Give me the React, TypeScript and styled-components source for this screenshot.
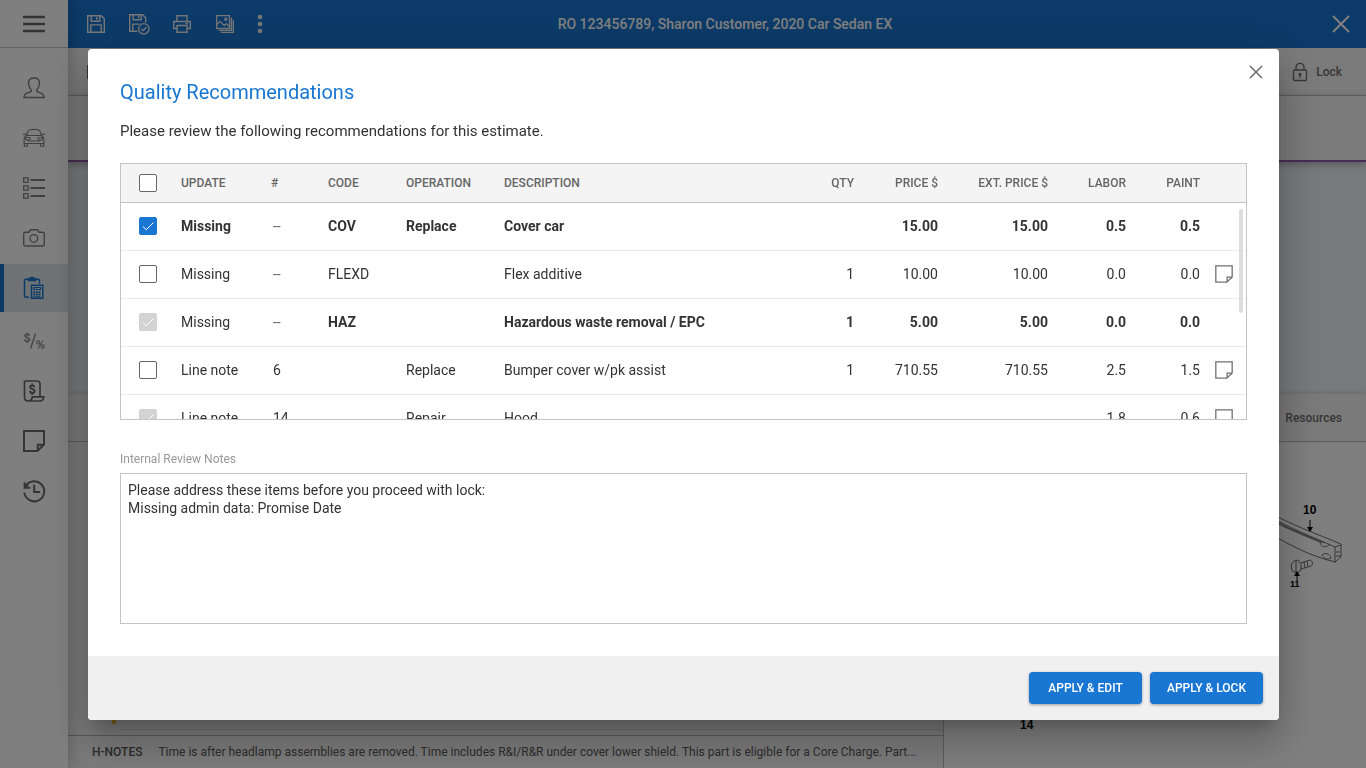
import React, { useState } from "react";
import styled, { createGlobalStyle, css } from "styled-components";

const Global = createGlobalStyle`
  *, *::before, *::after { box-sizing: border-box; }
  body { margin: 0; font-family: Roboto, "Liberation Sans", sans-serif; font-size: 14px; color: #333; }
  button, textarea { font-family: inherit; }
`;

/* ---------- page behind the dialog ---------- */

const Shell = styled.div`
  display: flex;
  min-height: 100vh;
  background: #fff;
`;

const Sidebar = styled.nav`
  width: 68px;
  flex: none;
  background: #fff;
  box-shadow: 0 0 16px rgba(0, 0, 0, 0.3);
  z-index: 1;
`;

const iconButton = css`
  display: flex;
  align-items: center;
  justify-content: center;
  padding: 0;
  border: 0;
  background: none;
  cursor: pointer;
`;

const MenuButton = styled.button`
  ${iconButton}
  width: 100%;
  height: 48px;
  color: #666;
  border-bottom: 1px solid #c8c8c8;
`;

const NavList = styled.div<{ $first?: boolean }>`
  display: flex;
  flex-direction: column;
  gap: 2px;
  padding-top: ${(p) => (p.$first ? "16px" : "5px")};
`;

const tones = { light: "#999", normal: "#808080", dark: "#6a6a6a", active: "#1976d2" };
type Tone = keyof typeof tones;

const NavButton = styled.button<{ $tone: Tone }>`
  ${iconButton}
  height: 48px;
  color: ${(p) => tones[p.$tone]};
  background: ${(p) => (p.$tone === "active" ? "#dfe6ec" : "transparent")};
  border-left: 4px solid ${(p) => (p.$tone === "active" ? "#1976d2" : "transparent")};
  padding-right: 4px;
`;

const Main = styled.main`
  flex: 1;
  min-width: 0;
  display: flex;
  flex-direction: column;
`;

const TopBar = styled.header`
  display: grid;
  grid-template-columns: 1fr auto 1fr;
  align-items: center;
  height: 48px;
  padding-left: 16px;
  background: #1976d2;
  color: #fff;
`;

const TopActions = styled.div`
  display: flex;
  gap: 19px;
`;

const TopButton = styled.button<{ $slim?: boolean }>`
  ${iconButton}
  width: ${(p) => (p.$slim ? "8px" : "24px")};
  height: 24px;
  color: #eee;
`;

const TopTitle = styled.div`
  font-weight: 500;
  line-height: 20px;
`;

const TopClose = styled.button`
  ${iconButton}
  width: 50px;
  height: 48px;
  justify-self: end;
  color: #fff;
`;

const Toolbar = styled.div`
  display: flex;
  justify-content: space-between;
  align-items: center;
  height: 48px;
  padding: 0 24px 0 19px;
  background: #f6f6f6;
  border-bottom: 1px solid #c8c8c8;
`;

const ToolbarButton = styled.button`
  ${iconButton}
  gap: 8px;
  height: 24px;
  font-size: 12px;
  font-weight: 500;
  color: #6f6f6f;
`;

const SummaryBand = styled.div`
  height: 66px;
  background: #f6f6f6;
  border-bottom: 2px solid #8e5aa8;
  box-shadow: 0 2px 8px rgba(0, 0, 0, 0.3);
  z-index: 0;
`;

const Canvas = styled.div`
  height: 232px;
  background: #eff3f7;
`;

const TabBar = styled.div`
  display: flex;
  justify-content: flex-end;
  align-items: center;
  height: 48px;
  padding-right: 24px;
  background: #f4f4f4;
  border-bottom: 1px solid #bbb;
  box-shadow: 0 -1px 4px rgba(0, 0, 0, 0.15);
`;

const TabButton = styled.button`
  ${iconButton}
  font-size: 12px;
  font-weight: 500;
  color: #6f6f6f;
`;

const Panels = styled.div`
  flex: 1;
  display: grid;
  grid-template-columns: minmax(0, 876fr) minmax(0, 422fr);
`;

const LinesPanel = styled.section`
  display: flex;
  flex-direction: column;
  justify-content: flex-end;
  background: #f6f6f6;
  border-right: 1px solid #bbb;
`;

const LineRow = styled.div`
  display: flex;
  height: 16px;
  padding-left: 44px;
`;

const LineFlag = styled.span`
  width: 4px;
  height: 5px;
  background: #fbc02d;
`;

const LineRule = styled.span`
  flex: 1;
  height: 11px;
  margin-left: 4px;
  border-bottom: 1px solid #d8d8d8;
`;

const HNotes = styled.div`
  display: flex;
  align-items: center;
  gap: 16px;
  height: 33px;
  padding: 0 24px;
  border-top: 1px solid #b4b4b4;
  font-size: 12px;
  color: #5a5a5a;
`;

const HNotesLabel = styled.span`
  font-weight: 500;
`;

const HNotesText = styled.span`
  flex: 1;
  overflow: hidden;
  text-overflow: ellipsis;
  white-space: nowrap;
`;

const Diagram = styled.svg`
  width: 100%;
  height: 326px;
  display: block;
`;

/* ---------- dialog ---------- */

const Backdrop = styled.div`
  position: fixed;
  inset: 0;
  z-index: 10;
  padding: 49px 87px 48px 88px;
  overflow: auto;
  background: rgba(0, 0, 0, 0.5);
`;

const Dialog = styled.div`
  background: #fff;
  border-radius: 4px;
  overflow: hidden;
  box-shadow: 0 11px 15px -7px rgba(0, 0, 0, 0.2), 0 24px 38px 3px rgba(0, 0, 0, 0.14),
    0 9px 46px 8px rgba(0, 0, 0, 0.12);
`;

const DialogHeader = styled.div`
  display: flex;
  justify-content: space-between;
  align-items: flex-start;
  padding: 11px 11px 0 32px;
`;

const DialogTitle = styled.h1`
  margin: 20px 0 0;
  font-size: 20px;
  line-height: 24px;
  font-weight: 400;
  color: #1976d2;
`;

const DialogClose = styled.button`
  ${iconButton}
  width: 24px;
  height: 24px;
  color: #707070;
`;

const DialogBody = styled.div`
  padding: 17px 32px 32px;
`;

const Intro = styled.p`
  margin: 0 0 22px;
  font-size: 15px;
  line-height: 20px;
`;

const TableFrame = styled.div`
  position: relative;
  height: 257px;
  border: 1px solid #c4c4c4;
`;

const TableScroll = styled.div`
  height: 100%;
  overflow-y: auto;
  scrollbar-width: none;
`;

const ScrollThumb = styled.div`
  position: absolute;
  top: 45px;
  right: 3px;
  width: 4px;
  height: 104px;
  border-radius: 2px;
  background: #ddd;
  pointer-events: none;
`;

const Table = styled.table`
  width: 100%;
  table-layout: fixed;
  border-collapse: separate;
  border-spacing: 0;
`;

type Align = "left" | "right";

const HeadCell = styled.th<{ $align?: Align }>`
  position: sticky;
  top: 0;
  z-index: 1;
  height: 39px;
  padding: 0;
  background: #f4f4f4;
  border-bottom: 1px solid #c4c4c4;
  font-size: 12px;
  font-weight: 500;
  color: #666;
  text-align: ${(p) => p.$align ?? "left"};
  white-space: nowrap;
`;

const Cell = styled.td<{ $align?: Align; $bold?: boolean; $inset?: boolean }>`
  height: 48px;
  padding: 0 0 2px ${(p) => (p.$inset ? "2px" : "0")};
  border-bottom: 1px solid #ececec;
  font-weight: ${(p) => (p.$bold ? 700 : 400)};
  text-align: ${(p) => p.$align ?? "left"};
  white-space: nowrap;
`;

const Muted = styled.span`
  color: #666;
`;

const Check = styled.input`
  appearance: none;
  display: block;
  width: 18px;
  height: 18px;
  margin: 0 0 0 18px;
  border: 1px solid #666;
  border-radius: 2px;
  background: #fff;
  &:checked {
    border-color: #1976d2;
    background-color: #1976d2;
  }
  &:disabled {
    border-color: #d3d3d3;
    background-color: #d3d3d3;
  }
`;

const CheckBox = styled.label`
  display: grid;
  width: 36px;
  & > * {
    grid-area: 1 / 1;
  }
  & > svg {
    margin-left: 18px;
    color: #fff;
    pointer-events: none;
  }
`;

const NoteButton = styled.button`
  ${iconButton}
  margin-left: 14px;
  width: 20px;
  height: 20px;
  color: #707070;
`;

const FieldLabel = styled.label`
  display: block;
  margin: 31px 0 6px;
  font-size: 12px;
  line-height: 16px;
  color: #999;
`;

const Notes = styled.textarea`
  display: block;
  width: 100%;
  height: 151px;
  padding: 7px;
  border: 1px solid #c4c4c4;
  border-radius: 0;
  outline: 0;
  resize: none;
  font-size: 14px;
  line-height: 18px;
  color: #333;
`;

const DialogFooter = styled.div`
  display: flex;
  justify-content: flex-end;
  gap: 8px;
  padding: 16px;
  background: #f0f0f0;
`;

const PrimaryButton = styled.button`
  width: 113px;
  height: 32px;
  padding: 0;
  border: 0;
  border-radius: 4px;
  background: #1976d2;
  box-shadow: 0 1px 3px rgba(0, 0, 0, 0.35);
  color: #fff;
  font-size: 12px;
  font-weight: 500;
  cursor: pointer;
`;

/* ---------- icons ---------- */

type IconProps = { w: number; h?: number; sw?: number; children: React.ReactNode };
const Icon = ({ w, h = w, sw = 1.4, children }: IconProps) => (
  <svg width={w} height={h} viewBox={`0 0 ${w} ${h}`} fill="none" stroke="currentColor" strokeWidth={sw} aria-hidden="true">
    {children}
  </svg>
);

const MenuIcon = () => (
  <Icon w={22} h={18} sw={2.6}>
    <path d="M0 2h22M0 9h22M0 16h22" />
  </Icon>
);

const CloseIcon = ({ size, sw }: { size: number; sw: number }) => (
  <Icon w={size} sw={sw}>
    <path d={`M1 1L${size - 1} ${size - 1}M${size - 1} 1L1 ${size - 1}`} />
  </Icon>
);

const PersonIcon = () => (
  <Icon w={24}>
    <path d="M2 21.5c0-3.2 1.6-4 4.4-4.8 2-.6 3-1 3-2 0-1.200-.8-1.600-1.700-3.200C6.900 10 6.500 8.600 6.500 7c0-3.200 2.200-5 5.500-5s5.500 1.800 5.500 5c0 1.600-.4 3-1.200 4.500-.9 1.600-1.700 2-1.700 3.200 0 1 1 1.400 3 2 2.800.8 4.400 1.600 4.400 4.800z" />
  </Icon>
);

const CarIcon = () => (
  <Icon w={24} h={20} sw={1.1}>
    <path d="M4.500 7.500l1.400-4c.4-1 .9-1.500 2-1.700 2.700-.5 5.500-.5 8.200 0 1.100.2 1.600.7 2 1.700l1.400 4" />
    <path d="M4.500 7.500h15l1.600 1.400c.6.600.8 1.300.8 2.200v4.400H2.100v-4.400c0-.9.200-1.600.8-2.200zM1 6.500c1-.5 2-.5 2.800 0l.7 1M23 6.500c-1-.5-2-.5-2.800 0l-.7 1" />
    <path d="M2.300 15.500v2.700h3v-2.700M18.700 15.500v2.700h3v-2.700M6 13h12" />
    <ellipse cx="5.700" cy="10.700" rx="2.300" ry="1.400" />
    <ellipse cx="18.300" cy="10.700" rx="2.300" ry="1.400" />
  </Icon>
);

const ListIcon = () => (
  <Icon w={22} sw={1.300}>
    <path d="M.7.900h4.400v4.400H.7zM.7 8.800h4.400v4.400H.7zM.7 16.700h4.400v4.400H.7z" />
    <path strokeWidth="2" d="M7.500 3H22M7.500 11H22M7.500 19H22" />
  </Icon>
);

const CameraIcon = () => (
  <Icon w={22} h={18}>
    <path d="M2.500 3.200H6l1.500-2.400h7L16 3.200h3.500c1.200 0 1.800.6 1.800 1.800v10.200c0 1.200-.6 1.800-1.800 1.800h-17C1.300 17 .7 16.400.7 15.200V5c0-1.200.6-1.800 1.800-1.800z" />
    <circle cx="10.800" cy="9.400" r="3.800" />
  </Icon>
);

const EstimateIcon = () => (
  <Icon w={22} h={24} sw={1.500}>
    <path d="M6 21.200H3c-1 0-1.500-.5-1.500-1.500V4.800c0-1 .5-1.500 1.500-1.500h2.500M12.500 3.300H15c1 0 1.500.5 1.500 1.500v3" />
    <path d="M5.500 4.500V2.600h2C7.700 1.600 8.200 1.300 9 1.300s1.300.3 1.500 1.300h2v1.900z" fill="currentColor" />
    <path d="M8.500 9.300h11.300v13H8.500z" />
    <path strokeWidth="1.200" d="M10.800 11.500h6.700v2h-6.700z" />
    <path strokeWidth="1.800" strokeDasharray="1.800 .8" d="M10.400 16.200h7.600M10.400 18.400h7.600M10.400 20.600h7.600" />
  </Icon>
);

const RatesIcon = () => (
  <Icon w={22} h={18}>
    <path strokeWidth="1.900" d="M6.200 4C6 2.900 5.200 2.300 4.200 2.300c-1.200 0-2 .6-2 1.600 0 2.200 4.200 1.200 4.200 3.600 0 1.100-.9 1.800-2.200 1.800S2 8.600 1.900 7.400M4.200.700v1.600M4.200 9.300v1.600" />
    <path strokeWidth="1.700" d="M12.600 1.500L7.600 16.500" />
    <path strokeWidth="1.300" d="M20 8.500l-5 8" />
    <ellipse cx="15.200" cy="10.400" rx="1.500" ry="1.800" strokeWidth="1.300" />
    <ellipse cx="19.700" cy="14.600" rx="1.500" ry="1.800" strokeWidth="1.300" />
  </Icon>
);

const InvoiceIcon = () => (
  <Icon w={22} sw={1.700}>
    <path d="M1.500 1h12.500c2 0 3 1.200 3 3v12.500M1.500 1v16c0 2.600 1.300 4 3.500 4h11.500c2.400 0 4.200-1.500 4.300-4.200H9.200c0 2.600-1.600 4.200-4.200 4.200" />
    <path strokeWidth="2" d="M11.500 7.200c-.2-1.100-1-1.700-2.200-1.700-1.300 0-2.200.6-2.200 1.700 0 2.400 4.500 1.200 4.500 3.800 0 1.200-.9 1.900-2.300 1.900S7 12.200 6.900 10.900M9.300 3.500v2M9.300 12.900v2" />
  </Icon>
);

const NoteIcon = ({ size, sw }: { size: number; sw: number }) => (
  <svg width={size} height={size} viewBox="0 0 22 22" fill="none" stroke="currentColor" strokeWidth={sw} aria-hidden="true">
    <path d="M1 1h20v13.500L14.500 21H1zM20.500 14.800h-5.700v5.700" />
  </svg>
);

const HistoryIcon = () => (
  <Icon w={24} sw={2}>
    <path d="M3.200 8A10 10 0 1 1 2.300 13.500M2.600 3.200v5.600h5.600M3 8.500L6 5.500" />
    <path d="M12.200 5.800v7.200h6" />
  </Icon>
);

const SaveIcon = () => (
  <Icon w={18}>
    <path d="M.700.700h13.600l3 3v13.600H.700zM4.200.700v5.600h8.600V.700M9.800 2v2.800M3.800 17.300v-7.400h10.400v7.400" />
  </Icon>
);

const SaveCheckIcon = () => (
  <Icon w={22}>
    <path d="M9.500 18.300H1.700V1.700h13l3 3v4.800M5.200 1.700v5.100h8V1.700M10.600 2.800v2.400M4.800 18.300v-7.200h6.700" />
    <circle cx="15.800" cy="15.800" r="5.200" />
    <path d="M13.400 15.800l1.800 1.800 3.200-3.400" />
  </Icon>
);

const PrintIcon = () => (
  <Icon w={18}>
    <path d="M4 6.500V.700h10v5.800M4 13.500H.700V6.500h16.600v7H14M4 10.500h10v6.800H4zM12.500 8.500h2.500" />
  </Icon>
);

const ImagesIcon = () => (
  <Icon w={18} sw={1.300}>
    <path d="M.7.700h12.800v12.800H.7zM15.400 2.800v12.600H2.800M17.300 4.800v12.500H4.800" />
    <path d="M.7 9.700l3.400-3.400 4.200 4.200 2-1.900 3.200 3.100" />
    <circle cx="9.800" cy="4.200" r="1.100" />
  </Icon>
);

const DotsIcon = () => (
  <svg width="6" height="20" viewBox="0 0 6 20" fill="currentColor" aria-hidden="true">
    <circle cx="3" cy="3" r="2.300" />
    <circle cx="3" cy="10" r="2.300" />
    <circle cx="3" cy="17" r="2.300" />
  </svg>
);

const LockIcon = () => (
  <Icon w={16} h={20} sw={1.300}>
    <rect x="1.500" y="8" width="13" height="10.500" rx="1.200" />
    <path d="M4 8V5.500c0-2.600 1.600-4.100 4-4.100s4 1.500 4 4.100V8M8 12.500v3.500" />
    <circle cx="8" cy="12.300" r=".9" fill="currentColor" />
  </Icon>
);

const TickIcon = () => (
  <Icon w={18} sw={1}>
    <path d="M4 9.500l3.300 3.200L14.500 5.500" />
  </Icon>
);

/* ---------- data ---------- */

type Line = {
  update: string; num: string; code: string; op: string; desc: string;
  qty: string; price: string; ext: string; labor: string; paint: string;
  checked?: boolean; disabled?: boolean; bold?: boolean; boldUpdate?: boolean; note?: boolean;
};

const lines: Line[] = [
  { update: "Missing", num: "--", code: "COV", op: "Replace", desc: "Cover car", qty: "", price: "15.00", ext: "15.00", labor: "0.5", paint: "0.5", checked: true, bold: true, boldUpdate: true },
  { update: "Missing", num: "--", code: "FLEXD", op: "", desc: "Flex additive", qty: "1", price: "10.00", ext: "10.00", labor: "0.0", paint: "0.0", note: true },
  { update: "Missing", num: "--", code: "HAZ", op: "", desc: "Hazardous waste removal / EPC", qty: "1", price: "5.00", ext: "5.00", labor: "0.0", paint: "0.0", checked: true, disabled: true, bold: true },
  { update: "Line note", num: "6", code: "", op: "Replace", desc: "Bumper cover w/pk assist", qty: "1", price: "710.55", ext: "710.55", labor: "2.5", paint: "1.5", note: true },
  { update: "Line note", num: "14", code: "", op: "Repair", desc: "Hood", qty: "", price: "", ext: "", labor: "1.8", paint: "0.6", checked: true, disabled: true, note: true },
];

const columns: { label: string; width?: number; align?: Align }[] = [
  { label: "UPDATE", width: 90 },
  { label: "#", width: 57 },
  { label: "CODE", width: 78 },
  { label: "OPERATION", width: 98 },
  { label: "DESCRIPTION" },
  { label: "QTY", width: 50, align: "right" },
  { label: "PRICE $", width: 84, align: "right" },
  { label: "EXT. PRICE $", width: 110, align: "right" },
  { label: "LABOR", width: 78, align: "right" },
  { label: "PAINT", width: 74, align: "right" },
];

type NavItem = { name: string; icon: React.ReactNode; tone: Tone };

const vehicleNav: NavItem[] = [
  { name: "Customer", icon: <PersonIcon />, tone: "normal" },
  { name: "Vehicle", icon: <CarIcon />, tone: "normal" },
  { name: "Checklist", icon: <ListIcon />, tone: "normal" },
  { name: "Photos", icon: <CameraIcon />, tone: "normal" },
  { name: "Estimate", icon: <EstimateIcon />, tone: "active" },
];

const recordNav: NavItem[] = [
  { name: "Rates", icon: <RatesIcon />, tone: "light" },
  { name: "Invoice", icon: <InvoiceIcon />, tone: "dark" },
  { name: "Notes", icon: <NoteIcon size={22} sw={2} />, tone: "dark" },
  { name: "History", icon: <HistoryIcon />, tone: "dark" },
];

const NavGroup = ({ items, first }: { items: NavItem[]; first?: boolean }) => (
  <NavList $first={first}>
    {items.map((n) => (
      <NavButton key={n.name} aria-label={n.name} $tone={n.tone}>{n.icon}</NavButton>
    ))}
  </NavList>
);

const CheckControl = ({ label, checked, disabled }: { label: string; checked?: boolean; disabled?: boolean }) => {
  const [on, setOn] = useState(!!checked);
  return (
    <CheckBox>
      <Check type="checkbox" aria-label={label} checked={on} disabled={disabled} onChange={(e) => setOn(e.target.checked)} />
      {on && <TickIcon />}
    </CheckBox>
  );
};

const RecommendationTable = () => {
  const [scroll, setScroll] = useState(0);
  return (
    <TableFrame>
      <TableScroll onScroll={(e) => setScroll(e.currentTarget.scrollTop)}>
        <Table>
          <colgroup>
            <col width={60} />
            {columns.map((c) => <col key={c.label} width={c.width} />)}
            <col width={46} />
          </colgroup>
          <thead>
            <tr>
              <HeadCell><CheckControl label="Select all" /></HeadCell>
              {columns.map((c) => <HeadCell key={c.label} $align={c.align}>{c.label}</HeadCell>)}
              <HeadCell />
            </tr>
          </thead>
          <tbody>
            {lines.map((l, i) => (
              <tr key={i}>
                <Cell><CheckControl label={l.desc} checked={l.checked} disabled={l.disabled} /></Cell>
                <Cell $bold={l.boldUpdate}>{l.update}</Cell>
                <Cell $inset>{l.num === "--" ? <Muted>--</Muted> : l.num}</Cell>
                <Cell $bold={l.bold}>{l.code}</Cell>
                <Cell $bold={l.bold}>{l.op}</Cell>
                <Cell $bold={l.bold}>{l.desc}</Cell>
                {[l.qty, l.price, l.ext, l.labor, l.paint].map((v, k) => (
                  <Cell key={k} $align="right" $bold={l.bold}>{v}</Cell>
                ))}
                <Cell>{l.note && <NoteButton aria-label="Line note"><NoteIcon size={18} sw={1.600} /></NoteButton>}</Cell>
              </tr>
            ))}
          </tbody>
        </Table>
      </TableScroll>
      <ScrollThumb style={{ transform: `translateY(${scroll}px)` }} />
    </TableFrame>
  );
};

const PartsDiagram = () => (
  <Diagram viewBox="0 0 422 326" preserveAspectRatio="xMaxYMin slice" fill="none" stroke="#6c6c6c" strokeWidth="1" role="img" aria-label="Bumper parts diagram">
    <path d="M325 70c20 12 48 22 72 32v13l-6 5c-24-6-42-15-66-29" />
    <path d="M325 74c20 12 44 21 66 31l6-2M335 81c14 8 30 13 46 20M391 105v16M392 110h4M392 114h5M325 77c16 9 34 16 53 24" />
    <path d="M376 101c1 4 6 5 9 2M378 113c3-3 8-1 9 3-3 2-7 1-9-3z" />
    <path d="M350 119l-3 4 1 6 5 2 4-3v-6l-3-4zM352 119v12M357 121l9-3c3 1 3 5 1 6l-10 3M360 120l1 6M363 119l1 6" />
    <path d="M366 78v8M353 132v8" stroke="#000" />
    <path d="M363 85h6l-3 5zM350 134h6l-3-5z" fill="#000" stroke="none" />
    <path d="M182 276c2 2 5 2 7 0" />
    <g fill="#000" stroke="none" fontFamily="'Liberation Sans Narrow', 'Liberation Sans', sans-serif" fontWeight="700">
      <text x="359" y="72" fontSize="12">10</text>
      <text x="346" y="145" fontSize="9">11</text>
      <text x="76" y="287" fontSize="12">14</text>
    </g>
  </Diagram>
);

export default function App() {
  return (
    <>
      <Global />
      <Shell>
        <Sidebar>
          <MenuButton aria-label="Menu"><MenuIcon /></MenuButton>
          <NavGroup items={vehicleNav} first />
          <NavGroup items={recordNav} />
        </Sidebar>
        <Main>
          <TopBar>
            <TopActions>
              <TopButton aria-label="Save"><SaveIcon /></TopButton>
              <TopButton aria-label="Save and verify"><SaveCheckIcon /></TopButton>
              <TopButton aria-label="Print"><PrintIcon /></TopButton>
              <TopButton aria-label="Images"><ImagesIcon /></TopButton>
              <TopButton aria-label="More" $slim><DotsIcon /></TopButton>
            </TopActions>
            <TopTitle>RO 123456789, Sharon Customer, 2020 Car Sedan EX</TopTitle>
            <TopClose aria-label="Close estimate"><CloseIcon size={18} sw={2} /></TopClose>
          </TopBar>
          <Toolbar>
            <ToolbarButton aria-label="Notes"><NoteIcon size={14} sw={2} /></ToolbarButton>
            <ToolbarButton><LockIcon />Lock</ToolbarButton>
          </Toolbar>
          <SummaryBand />
          <Canvas />
          <TabBar><TabButton>Resources</TabButton></TabBar>
          <Panels>
            <LinesPanel>
              <LineRow><LineFlag /><LineRule /></LineRow>
              <HNotes>
                <HNotesLabel>H-NOTES</HNotesLabel>
                <HNotesText>
                  Time is after headlamp assemblies are removed. Time includes R&amp;I/R&amp;R under cover lower shield. This part is eligible for a Core Charge. Part...
                </HNotesText>
              </HNotes>
            </LinesPanel>
            <PartsDiagram />
          </Panels>
        </Main>
      </Shell>
      <Backdrop>
        <Dialog role="dialog" aria-modal="true" aria-labelledby="dialog-title">
          <DialogHeader>
            <DialogTitle id="dialog-title">Quality Recommendations</DialogTitle>
            <DialogClose aria-label="Close"><CloseIcon size={14} sw={1.600} /></DialogClose>
          </DialogHeader>
          <DialogBody>
            <Intro>Please review the following recommendations for this estimate.</Intro>
            <RecommendationTable />
            <FieldLabel htmlFor="review-notes">Internal Review Notes</FieldLabel>
            <Notes
              id="review-notes"
              spellCheck={false}
              defaultValue={"Please address these items before you proceed with lock:\nMissing admin data: Promise Date"}
            />
          </DialogBody>
          <DialogFooter>
            <PrimaryButton>APPLY &amp; EDIT</PrimaryButton>
            <PrimaryButton>APPLY &amp; LOCK</PrimaryButton>
          </DialogFooter>
        </Dialog>
      </Backdrop>
    </>
  );
}
